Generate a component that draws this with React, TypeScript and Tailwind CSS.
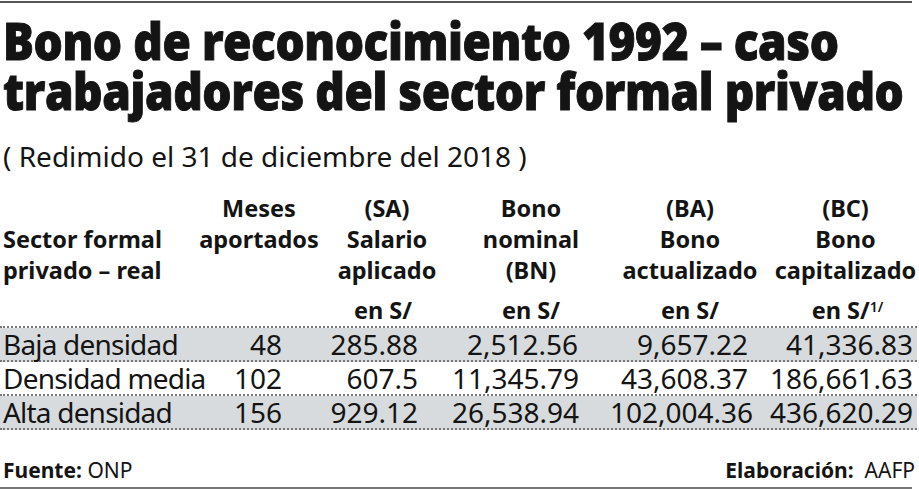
import React from "react";

const rows = [
  { name: "Baja densidad", m: "48", sa: "285.88", bn: "2,512.56", ba: "9,657.22", bc: "41,336.83", gray: true },
  { name: "Densidad media", m: "102", sa: "607.5", bn: "11,345.79", ba: "43,608.37", bc: "186,661.63", gray: false },
  { name: "Alta densidad", m: "156", sa: "929.12", bn: "26,538.94", ba: "102,004.36", bc: "436,620.29", gray: true },
];

export default function App() {
  return (
    <div className="w-[919px] h-[489px] bg-white text-[#141414] overflow-hidden relative" style={{ fontFamily: '"Noto Sans", "Open Sans", sans-serif' }}>
      <div className="h-[2px] w-[912px] bg-[#555] mt-[1px]" />
      <h1
        className="mt-[12px] pl-[3px] text-[52px] leading-[50px] font-extrabold tracking-[-0.5px] whitespace-nowrap [-webkit-text-stroke:1px_#141414]"
        style={{ fontFamily: '"Open Sans", "Noto Sans", sans-serif' }}
      >
        <span className="inline-block origin-left scale-x-[0.885]">
          Bono de reconocimiento 1992 – caso
          <br />
          trabajadores del sector formal privado
        </span>
      </h1>
      <div className="mt-[26px] pl-[3px] text-[28px] leading-[30px] whitespace-nowrap">( Redimido el 31 de diciembre del 2018 )</div>

      <div className="grid grid-cols-[196px_126px_130px_158px_160px_149px] mt-[22px] text-[23.5px] font-bold leading-[31px]">
        <div className="self-end pl-[3px] whitespace-nowrap">
          Sector formal
          <br />
          privado – real
        </div>
        <div className="self-end text-center pb-[31px] whitespace-nowrap">
          Meses
          <br />
          aportados
        </div>
        <div className="self-end text-center whitespace-nowrap">
          (SA)
          <br />
          Salario
          <br />
          aplicado
        </div>
        <div className="self-end text-center whitespace-nowrap">
          Bono
          <br />
          nominal
          <br />
          (BN)
        </div>
        <div className="self-end text-center whitespace-nowrap">
          (BA)
          <br />
          Bono
          <br />
          actualizado
        </div>
        <div className="self-end text-center whitespace-nowrap pl-[2px]">
          (BC)
          <br />
          Bono
          <br />
          capitalizado
        </div>
        <div />
        <div />
        <div className="text-center mt-[9px] pr-[8px]">en S/</div>
        <div className="text-center mt-[9px]">en S/</div>
        <div className="text-center mt-[9px]">en S/</div>
        <div className="text-center mt-[9px] pl-[6px] whitespace-nowrap">
          en S/<sup className="text-[14px] font-semibold">1/</sup>
        </div>
      </div>

      <div className="mt-[0px] border-t-2 border-dotted border-[#777] w-[917px]">
        {rows.map((r) => (
          <div
            key={r.name}
            className={`grid grid-cols-[196px_126px_130px_158px_160px_149px] h-[34px] items-center text-[28px] leading-[32px] border-b-2 border-dotted border-[#777] whitespace-nowrap ${r.gray ? "bg-[#d8dbdd]" : "bg-white"}`}
          >
            <div className="pl-[3px] tracking-[-0.8px]">{r.name}</div>
            <div className="text-right pr-[40px]">{r.m}</div>
            <div className="text-right pr-[34px]">{r.sa}</div>
            <div className="text-right pr-[32px]">{r.bn}</div>
            <div className="text-right pr-[22px]">{r.ba}</div>
            <div className="text-right pr-[6px]">{r.bc}</div>
          </div>
        ))}
      </div>

      <div className="flex justify-between w-[915px] pl-[3px] mt-[28px] text-[21px] leading-[24px]">
        <div>
          <span className="font-bold">Fuente:</span> ONP
        </div>
        <div>
          <span className="font-bold">Elaboración:</span>&nbsp; AAFP
        </div>
      </div>
      <div className="h-[2px] w-[912px] bg-[#777] mt-[5px]" />
    </div>
  );
}
